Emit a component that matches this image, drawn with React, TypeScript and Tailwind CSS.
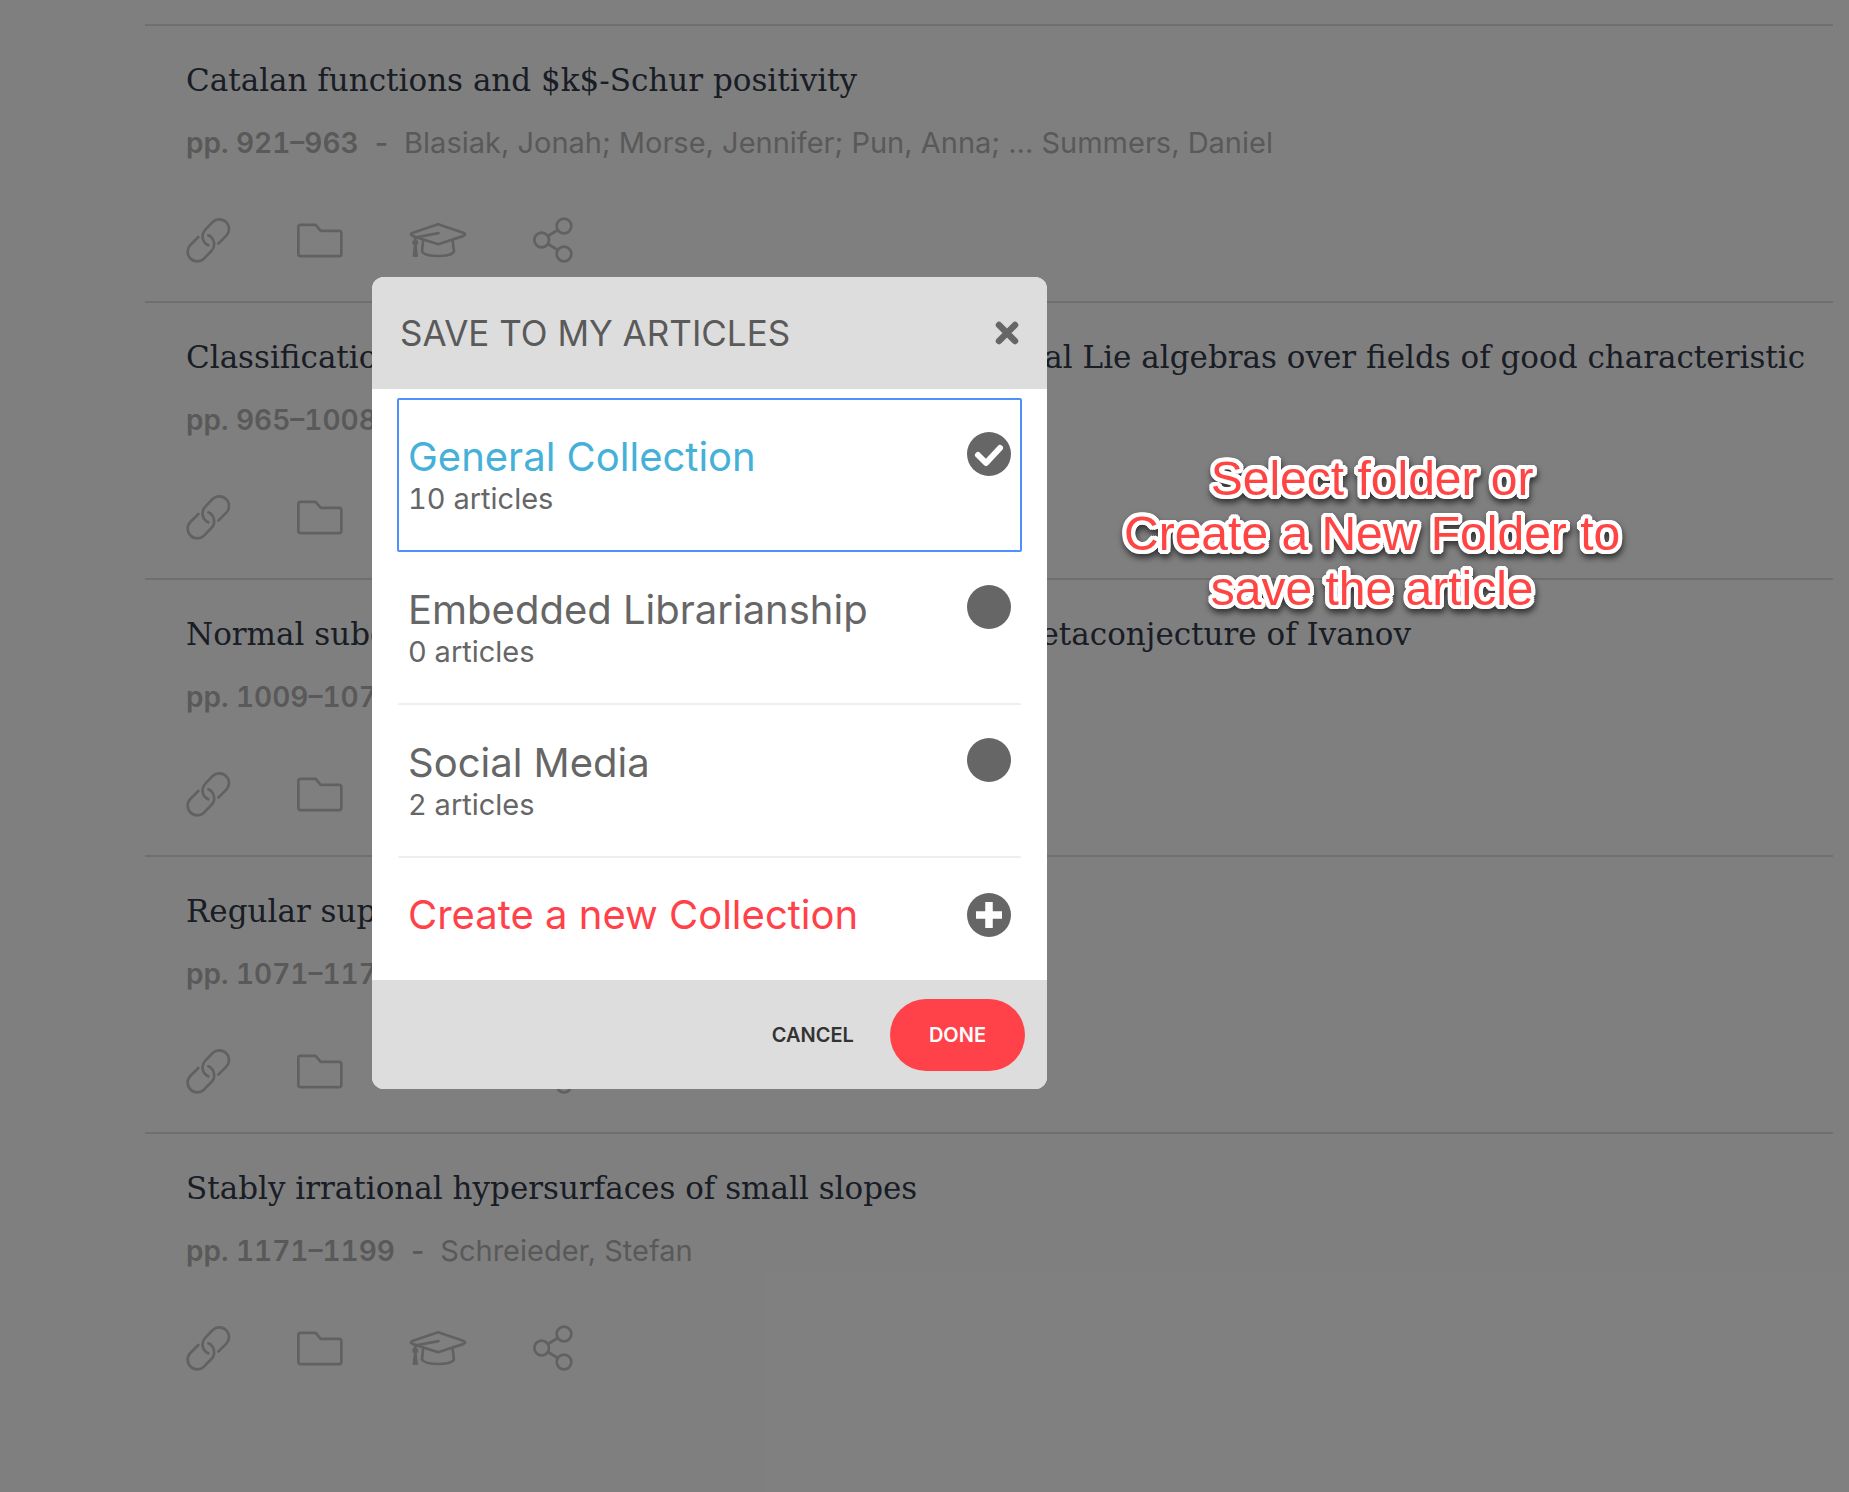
import { useState } from 'react';

const articles = [
  { title: 'Catalan functions and $k$-Schur positivity', pages: '921–963', authors: 'Blasiak, Jonah; Morse, Jennifer; Pun, Anna; ... Summers, Daniel' },
  { title: 'Classification of the maximal subalgebras of exceptional Lie algebras over fields of good characteristic', pages: '965–1008', authors: 'Premet, Alexander; Stewart, David' },
  { title: 'Normal subgroups of mapping class groups and the metaconjecture of Ivanov', pages: '1009–1079', authors: 'Brendle, Tara; Margalit, Dan' },
  { title: 'Regular supercuspidal representations', pages: '1071–1170', authors: 'Kaletha, Tasho' },
  { title: 'Stably irrational hypersurfaces of small slopes', pages: '1171–1199', authors: 'Schreieder, Stefan' },
];

const collections = [
  { id: 'general', name: 'General Collection', count: 10 },
  { id: 'embedded', name: 'Embedded Librarianship', count: 0 },
  { id: 'social', name: 'Social Media', count: 2 },
];

function LinkIcon() {
  return (
    <svg viewBox="46 52 135 135" className="w-[45px] h-[45px]" fill="none" stroke="currentColor" strokeWidth="8" strokeLinecap="round">
      <path d="M143 129L167 105A29 29 0 0 0 126 64L104 87A29 29 0 0 0 113 134" />
      <path d="M83 109L59 133A29 29 0 0 0 100 174L122 151A29 29 0 0 0 113 104" />
    </svg>
  );
}

function FolderIcon() {
  return (
    <svg viewBox="378 68 138 104" className="w-[46px] h-[35px]" fill="none" stroke="currentColor" strokeWidth="8" strokeLinejoin="round">
      <path d="M388 73H434L449 91H505Q511 91 511 98V160Q511 167 505 167H389Q382 167 382 160V80Q382 73 388 73Z" />
    </svg>
  );
}

function CapIcon() {
  return (
    <svg viewBox="716 69 171 104" className="w-[58px] h-[35px]" fill="none" stroke="currentColor" strokeWidth="8" strokeLinecap="round" strokeLinejoin="round">
      <path d="M802 73L876 98Q888 103 876 108L802 132L727 108Q715 103 727 98Z" />
      <path d="M803 99L734 112V124M757 122L754 154Q762 167 802 167Q842 167 849 154L845 122" />
      <circle cx="734" cy="128" r="5" fill="currentColor" />
      <path d="M731 138L728 168H740L737 138Z" fill="currentColor" strokeWidth="4" />
    </svg>
  );
}

function ShareIcon() {
  return (
    <svg viewBox="1088 51 120 138" className="w-[40px] h-[46px]" fill="none" stroke="currentColor" strokeWidth="8">
      <circle cx="1181" cy="78" r="22" />
      <circle cx="1114" cy="120" r="22" />
      <circle cx="1181" cy="162" r="22" />
      <path d="M1133 108L1162 90M1133 132L1162 150" />
    </svg>
  );
}

export default function App() {
  const [selected, setSelected] = useState('general');

  return (
    <div className="relative min-h-screen overflow-hidden bg-white font-['Inter',sans-serif]">
      <main className="pt-6 pl-[145px] pr-4">
        {articles.map(a => (
          <article key={a.pages} className="border-t-2 border-[#dedede] pt-[30px] pb-[38px] pl-[41px]">
            <h2 className="whitespace-nowrap font-['DejaVu_Serif',serif] text-[31px] leading-[48px] text-[#333a4a]">
              <a href="#">{a.title}</a>
            </h2>
            <p className="mt-[19px] whitespace-nowrap text-[29px] leading-[40px] text-[#b3b3b3]">
              <span className="text-[28px] font-semibold tabular-nums">pp. {a.pages}</span>
              <span className="mx-4 font-medium">-</span>
              {a.authors}
            </p>
            <div className="mt-[54px] flex items-center gap-[66px] text-[#c2c2c2]">
              <a href="#" aria-label="Link"><LinkIcon /></a>
              <a href="#" aria-label="Save to folder"><FolderIcon /></a>
              <a href="#" aria-label="Cite"><CapIcon /></a>
              <a href="#" aria-label="Share"><ShareIcon /></a>
            </div>
          </article>
        ))}
      </main>

      <div className="absolute inset-0 flex items-start bg-black/50 pt-[277px] pl-[372px]">
        <div role="dialog" aria-labelledby="save-title" className="w-[675px] shrink-0 overflow-hidden rounded-xl bg-white text-[#666]">
          <header className="flex h-28 items-center justify-between bg-[#dddddd] px-7">
            <h1 id="save-title" className="text-[35px] leading-[40px] text-[#5a5a5a]">SAVE TO MY ARTICLES</h1>
            <button aria-label="Close">
              <svg viewBox="0 0 24 24" className="size-6" stroke="currentColor" strokeWidth="6.5" strokeLinecap="round">
                <path d="M4 4L20 20M20 4L4 20" />
              </svg>
            </button>
          </header>

          <div className="px-[25px] pt-[9px]">
            {collections.map(c => (
              <label
                key={c.id}
                className={`-mt-px flex h-[154px] items-start justify-between rounded-xs border-2 px-[9px] pt-8 first:mt-0 ${
                  selected === c.id ? 'border-[#4d90fe]' : 'border-transparent border-b-[#eeeeee]'
                }`}
              >
                <span>
                  <span className={`block text-[40px] leading-[50px] ${selected === c.id ? 'text-[#45b1d9]' : ''}`}>{c.name}</span>
                  <span className="block text-[29px] leading-[34px] tabular-nums">{c.count} articles</span>
                </span>
                <span className="relative size-11 shrink-0">
                  <input
                    type="radio"
                    name="collection"
                    checked={selected === c.id}
                    onChange={() => setSelected(c.id)}
                    className="size-11 appearance-none rounded-full bg-[#666]"
                  />
                  {selected === c.id && (
                    <svg viewBox="0 0 44 44" className="pointer-events-none absolute inset-0 size-11" fill="none" stroke="white" strokeWidth="6" strokeLinecap="round" strokeLinejoin="round">
                      <path d="M11 23L19 31L33 16" />
                    </svg>
                  )}
                </span>
              </label>
            ))}
            <button className="flex w-full items-center justify-between px-[11px] pt-8 pb-10 text-[#ff4249]">
              <span className="text-[40px] leading-[50px]">Create a new Collection</span>
              <svg viewBox="0 0 44 44" className="size-11" fill="none">
                <circle cx="22" cy="22" r="22" fill="#666" />
                <path d="M22 9V35M9 22H35" stroke="white" strokeWidth="7.5" />
              </svg>
            </button>
          </div>

          <footer className="flex h-[109px] items-center justify-end gap-9 bg-[#dddddd] pr-[22px] text-xl font-semibold">
            <button className="text-[#333]">CANCEL</button>
            <button className="h-[72px] rounded-full bg-[#ff4249] px-[39px] text-white">DONE</button>
          </footer>
        </div>

        <p className="mt-[174px] ml-[77px] shrink-0 text-center font-['Liberation_Sans',Arial,sans-serif] text-[48px] leading-[55px] whitespace-nowrap text-[#ff4444] drop-shadow-[1px_4px_3px_rgba(0,0,0,0.6)] [text-shadow:4px_0_white,-4px_0_white,0_4px_white,0_-4px_white,3px_3px_white,-3px_3px_white,3px_-3px_white,-3px_-3px_white,4px_2px_white,-4px_2px_white,4px_-2px_white,-4px_-2px_white,2px_4px_white,-2px_4px_white,2px_-4px_white,-2px_-4px_white,2px_0_white,-2px_0_white,0_2px_white,0_-2px_white]">
          Select folder or<br />Create a New Folder to<br />save the article
        </p>
      </div>
    </div>
  );
}
